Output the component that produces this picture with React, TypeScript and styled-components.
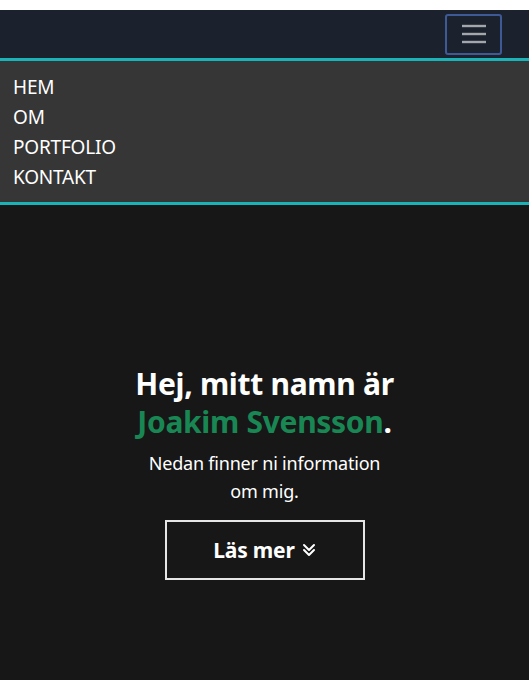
import React from "react";
import styled, { createGlobalStyle } from "styled-components";

const Global = createGlobalStyle`
  html, body { margin: 0; padding: 0; background: #ffffff; }
  body { font-family: "Noto Sans", "Open Sans", sans-serif; }
  * { box-sizing: border-box; }
`;

const Page = styled.div`
  padding-top: 10px;
  background: #ffffff;
  min-height: 680px;
  display: flex;
  flex-direction: column;
`;

const TopBar = styled.header`
  height: 48px;
  background: #1b222d;
  border-bottom: 3px solid #1ab3b8;
  display: flex;
  align-items: center;
  justify-content: flex-end;
  padding-right: 27px;
  box-sizing: content-box;
`;

const Toggler = styled.button`
  width: 57px;
  height: 41px;
  border: 2px solid #3d5a96;
  border-radius: 3px;
  background: transparent;
  display: flex;
  align-items: center;
  justify-content: center;
  padding: 0;
`;

const Menu = styled.nav`
  background: #363636;
  border-bottom: 3px solid #1ab3b8;
  padding: 11px 13px 10px;
  display: flex;
  flex-direction: column;
`;

const MenuLink = styled.a`
  color: #ffffff;
  font-size: 19px;
  line-height: 30px;
  text-decoration: none;
  letter-spacing: -0.2px;
`;

const Hero = styled.main`
  flex: 1;
  background: #171717;
  display: flex;
  flex-direction: column;
  align-items: center;
  padding-top: 160px;
`;

const Title = styled.h1`
  margin: 0;
  width: 280px;
  text-align: center;
  color: #ffffff;
  font-size: 30px;
  font-weight: 700;
  line-height: 38px;
  letter-spacing: -0.3px;
`;

const Name = styled.span`
  color: #198754;
`;

const Lead = styled.p`
  margin: 8px 0 0;
  width: 250px;
  text-align: center;
  color: #ffffff;
  font-size: 18px;
  line-height: 28px;
  letter-spacing: -0.2px;
`;

const MoreButton = styled.a`
  margin-top: 15px;
  width: 200px;
  height: 60px;
  border: 2px solid #e6e6e6;
  color: #ffffff;
  display: flex;
  align-items: center;
  justify-content: center;
  gap: 7px;
  font-size: 21px;
  font-weight: 700;
  text-decoration: none;
  letter-spacing: -0.2px;
`;

export default function App() {
  return (
    <>
      <Global />
      <Page>
        <TopBar>
          <Toggler aria-label="Toggle navigation">
            <svg width="26" height="20" viewBox="0 0 26 20">
              <g stroke="#a3a6ab" strokeWidth="2.4" strokeLinecap="butt">
                <line x1="1" y1="2" x2="25" y2="2" />
                <line x1="1" y1="10" x2="25" y2="10" />
                <line x1="1" y1="18" x2="25" y2="18" />
              </g>
            </svg>
          </Toggler>
        </TopBar>
        <Menu>
          <MenuLink href="#">HEM</MenuLink>
          <MenuLink href="#">OM</MenuLink>
          <MenuLink href="#">PORTFOLIO</MenuLink>
          <MenuLink href="#">KONTAKT</MenuLink>
        </Menu>
        <Hero>
          <Title>
            Hej, mitt namn är <Name>Joakim Svensson</Name>.
          </Title>
          <Lead>Nedan finner ni information om mig.</Lead>
          <MoreButton href="#">
            Läs mer
            <svg width="14" height="14" viewBox="0 0 14 14">
              <g fill="none" stroke="#ffffff" strokeWidth="2" strokeLinecap="round" strokeLinejoin="round">
                <polyline points="2,2 7,7 12,2" />
                <polyline points="2,7 7,12 12,7" />
              </g>
            </svg>
          </MoreButton>
        </Hero>
      </Page>
    </>
  );
}
